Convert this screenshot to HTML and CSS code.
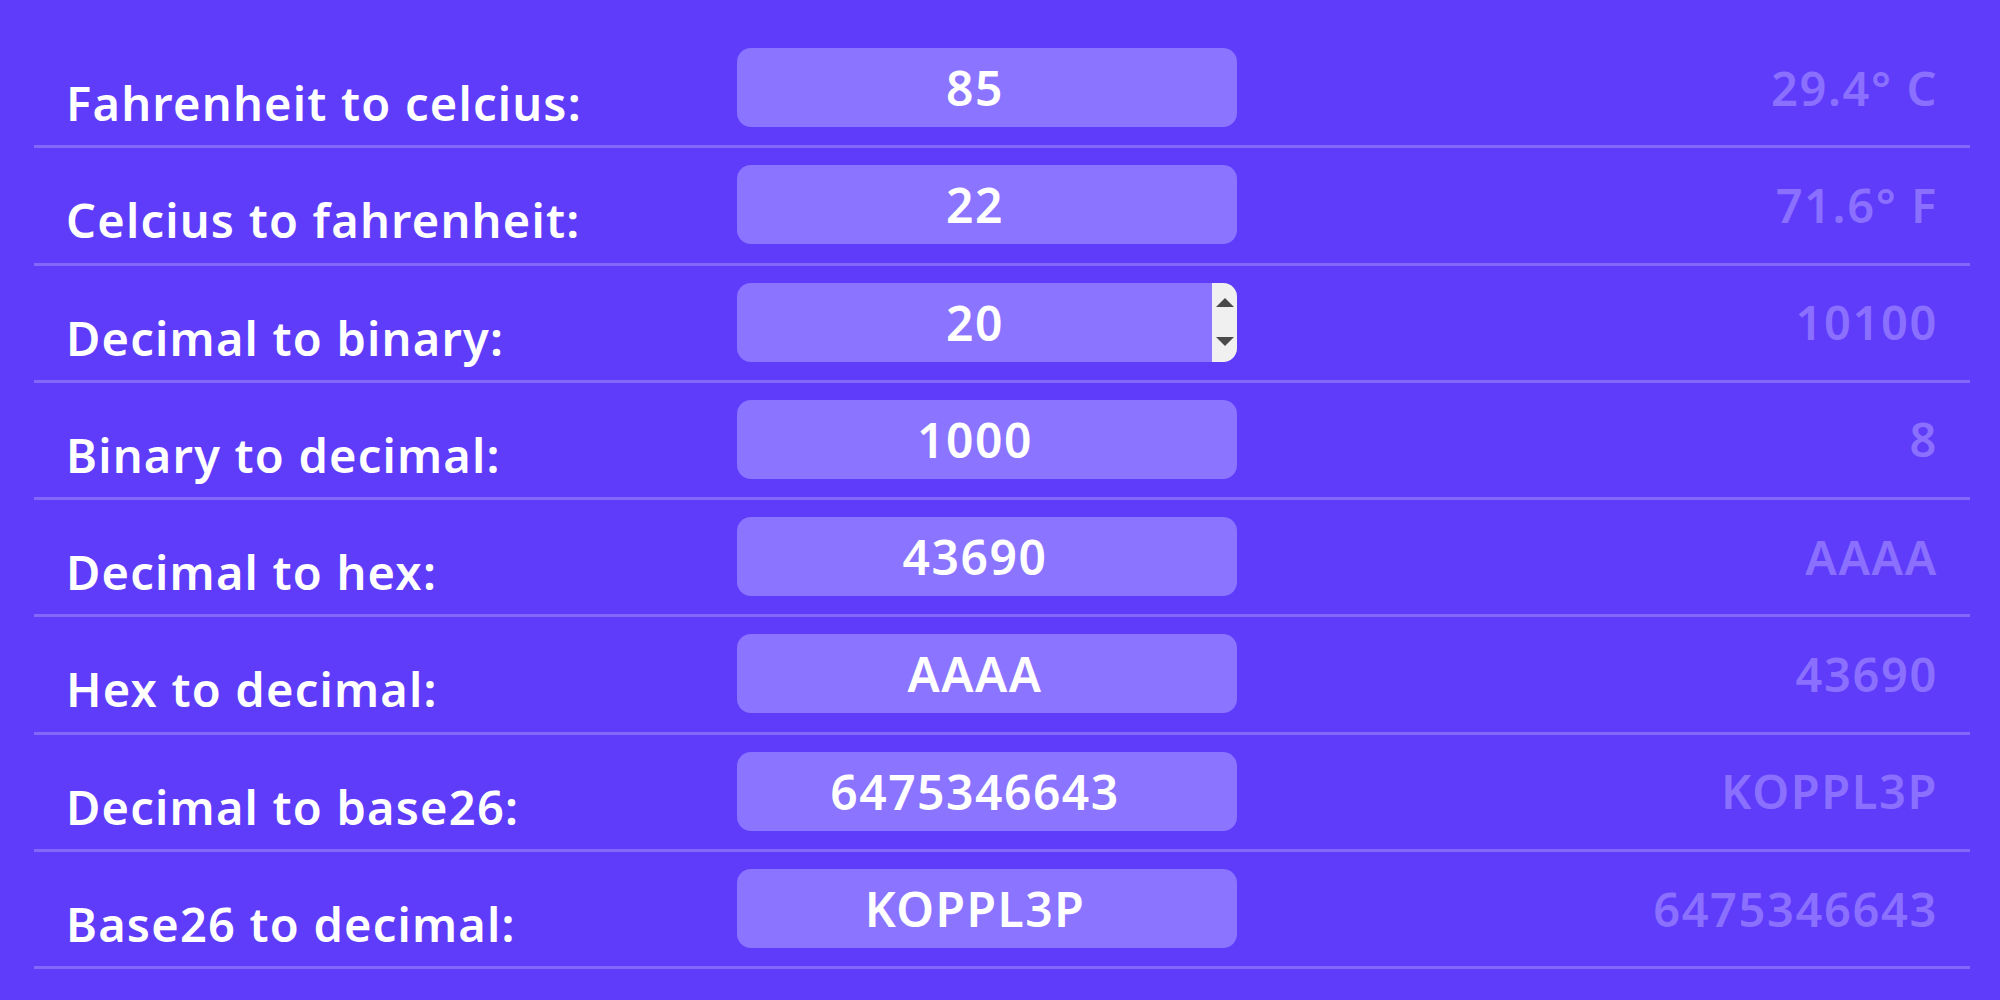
FILE: index.html
```html
<!DOCTYPE html>
<html>
<head>
<meta charset="utf-8">
<link rel="stylesheet" href="styles.css">
</head>
<body>
<main class="converter">
  <div class="row">
    <label class="label">Fahrenheit to celcius:</label>
    <div class="field"><input class="box" type="text" value="85"></div>
    <div class="result">29.4° C</div>
  </div>
  <div class="row">
    <label class="label">Celcius to fahrenheit:</label>
    <div class="field"><input class="box" type="text" value="22"></div>
    <div class="result">71.6° F</div>
  </div>
  <div class="row">
    <label class="label">Decimal to binary:</label>
    <div class="field"><input class="box" type="text" value="20">
      <span class="spinner"><span class="arrow up"></span><span class="arrow down"></span></span>
    </div>
    <div class="result">10100</div>
  </div>
  <div class="row">
    <label class="label">Binary to decimal:</label>
    <div class="field"><input class="box" type="text" value="1000"></div>
    <div class="result">8</div>
  </div>
  <div class="row">
    <label class="label">Decimal to hex:</label>
    <div class="field"><input class="box" type="text" value="43690"></div>
    <div class="result">AAAA</div>
  </div>
  <div class="row">
    <label class="label">Hex to decimal:</label>
    <div class="field"><input class="box" type="text" value="AAAA"></div>
    <div class="result">43690</div>
  </div>
  <div class="row">
    <label class="label">Decimal to base26:</label>
    <div class="field"><input class="box" type="text" value="6475346643"></div>
    <div class="result">KOPPL3P</div>
  </div>
  <div class="row">
    <label class="label">Base26 to decimal:</label>
    <div class="field"><input class="box" type="text" value="KOPPL3P"></div>
    <div class="result">6475346643</div>
  </div>
</main>
</body>
</html>
```

FILE: styles.css
```css
html, body {
  margin: 0;
  padding: 0;
  background: #5e3cf9;
}
body {
  font-family: "Noto Sans", "Open Sans", sans-serif;
  font-weight: 600;
  color: #ffffff;
  height: 1000px;
  overflow: hidden;
}
.converter {
  padding: 31px 30px 0 34px;
}
.row {
  display: grid;
  grid-template-columns: 703px 500px 1fr;
  padding: 17px 32px 18.3px 0;
  border-bottom: 3px solid #8468fc;
}
.label {
  align-self: end;
  padding-left: 32px;
  padding-bottom: 1px;
  font-size: 47px;
  line-height: 46px;
  letter-spacing: 1.2px;
  white-space: nowrap;
}
.field {
  position: relative;
  height: 79px;
}
.box {
  box-sizing: border-box;
  width: 100%;
  height: 79px;
  border: none;
  outline: none;
  margin: 0;
  border-radius: 14px;
  background: #8b74ff;
  color: #ffffff;
  font-family: inherit;
  font-weight: 600;
  font-size: 48px;
  letter-spacing: 1.5px;
  text-align: center;
  padding: 0 24px 0 0;
}
.result {
  align-self: center;
  justify-self: end;
  font-size: 47px;
  line-height: 46px;
  letter-spacing: 1.6px;
  color: #8b70ff;
  white-space: nowrap;
}
.spinner {
  position: absolute;
  top: 0;
  right: 0;
  width: 25px;
  height: 79px;
  background: #f0f0f0;
  border-radius: 0 14px 14px 0;
  display: flex;
  flex-direction: column;
  justify-content: space-between;
  align-items: center;
  padding: 15px 0 16px;
  box-sizing: border-box;
}
.arrow {
  width: 0;
  height: 0;
  border-left: 9px solid transparent;
  border-right: 9px solid transparent;
}
.up {
  border-bottom: 9px solid #4a4a4a;
}
.down {
  border-top: 9px solid #4a4a4a;
}
```
